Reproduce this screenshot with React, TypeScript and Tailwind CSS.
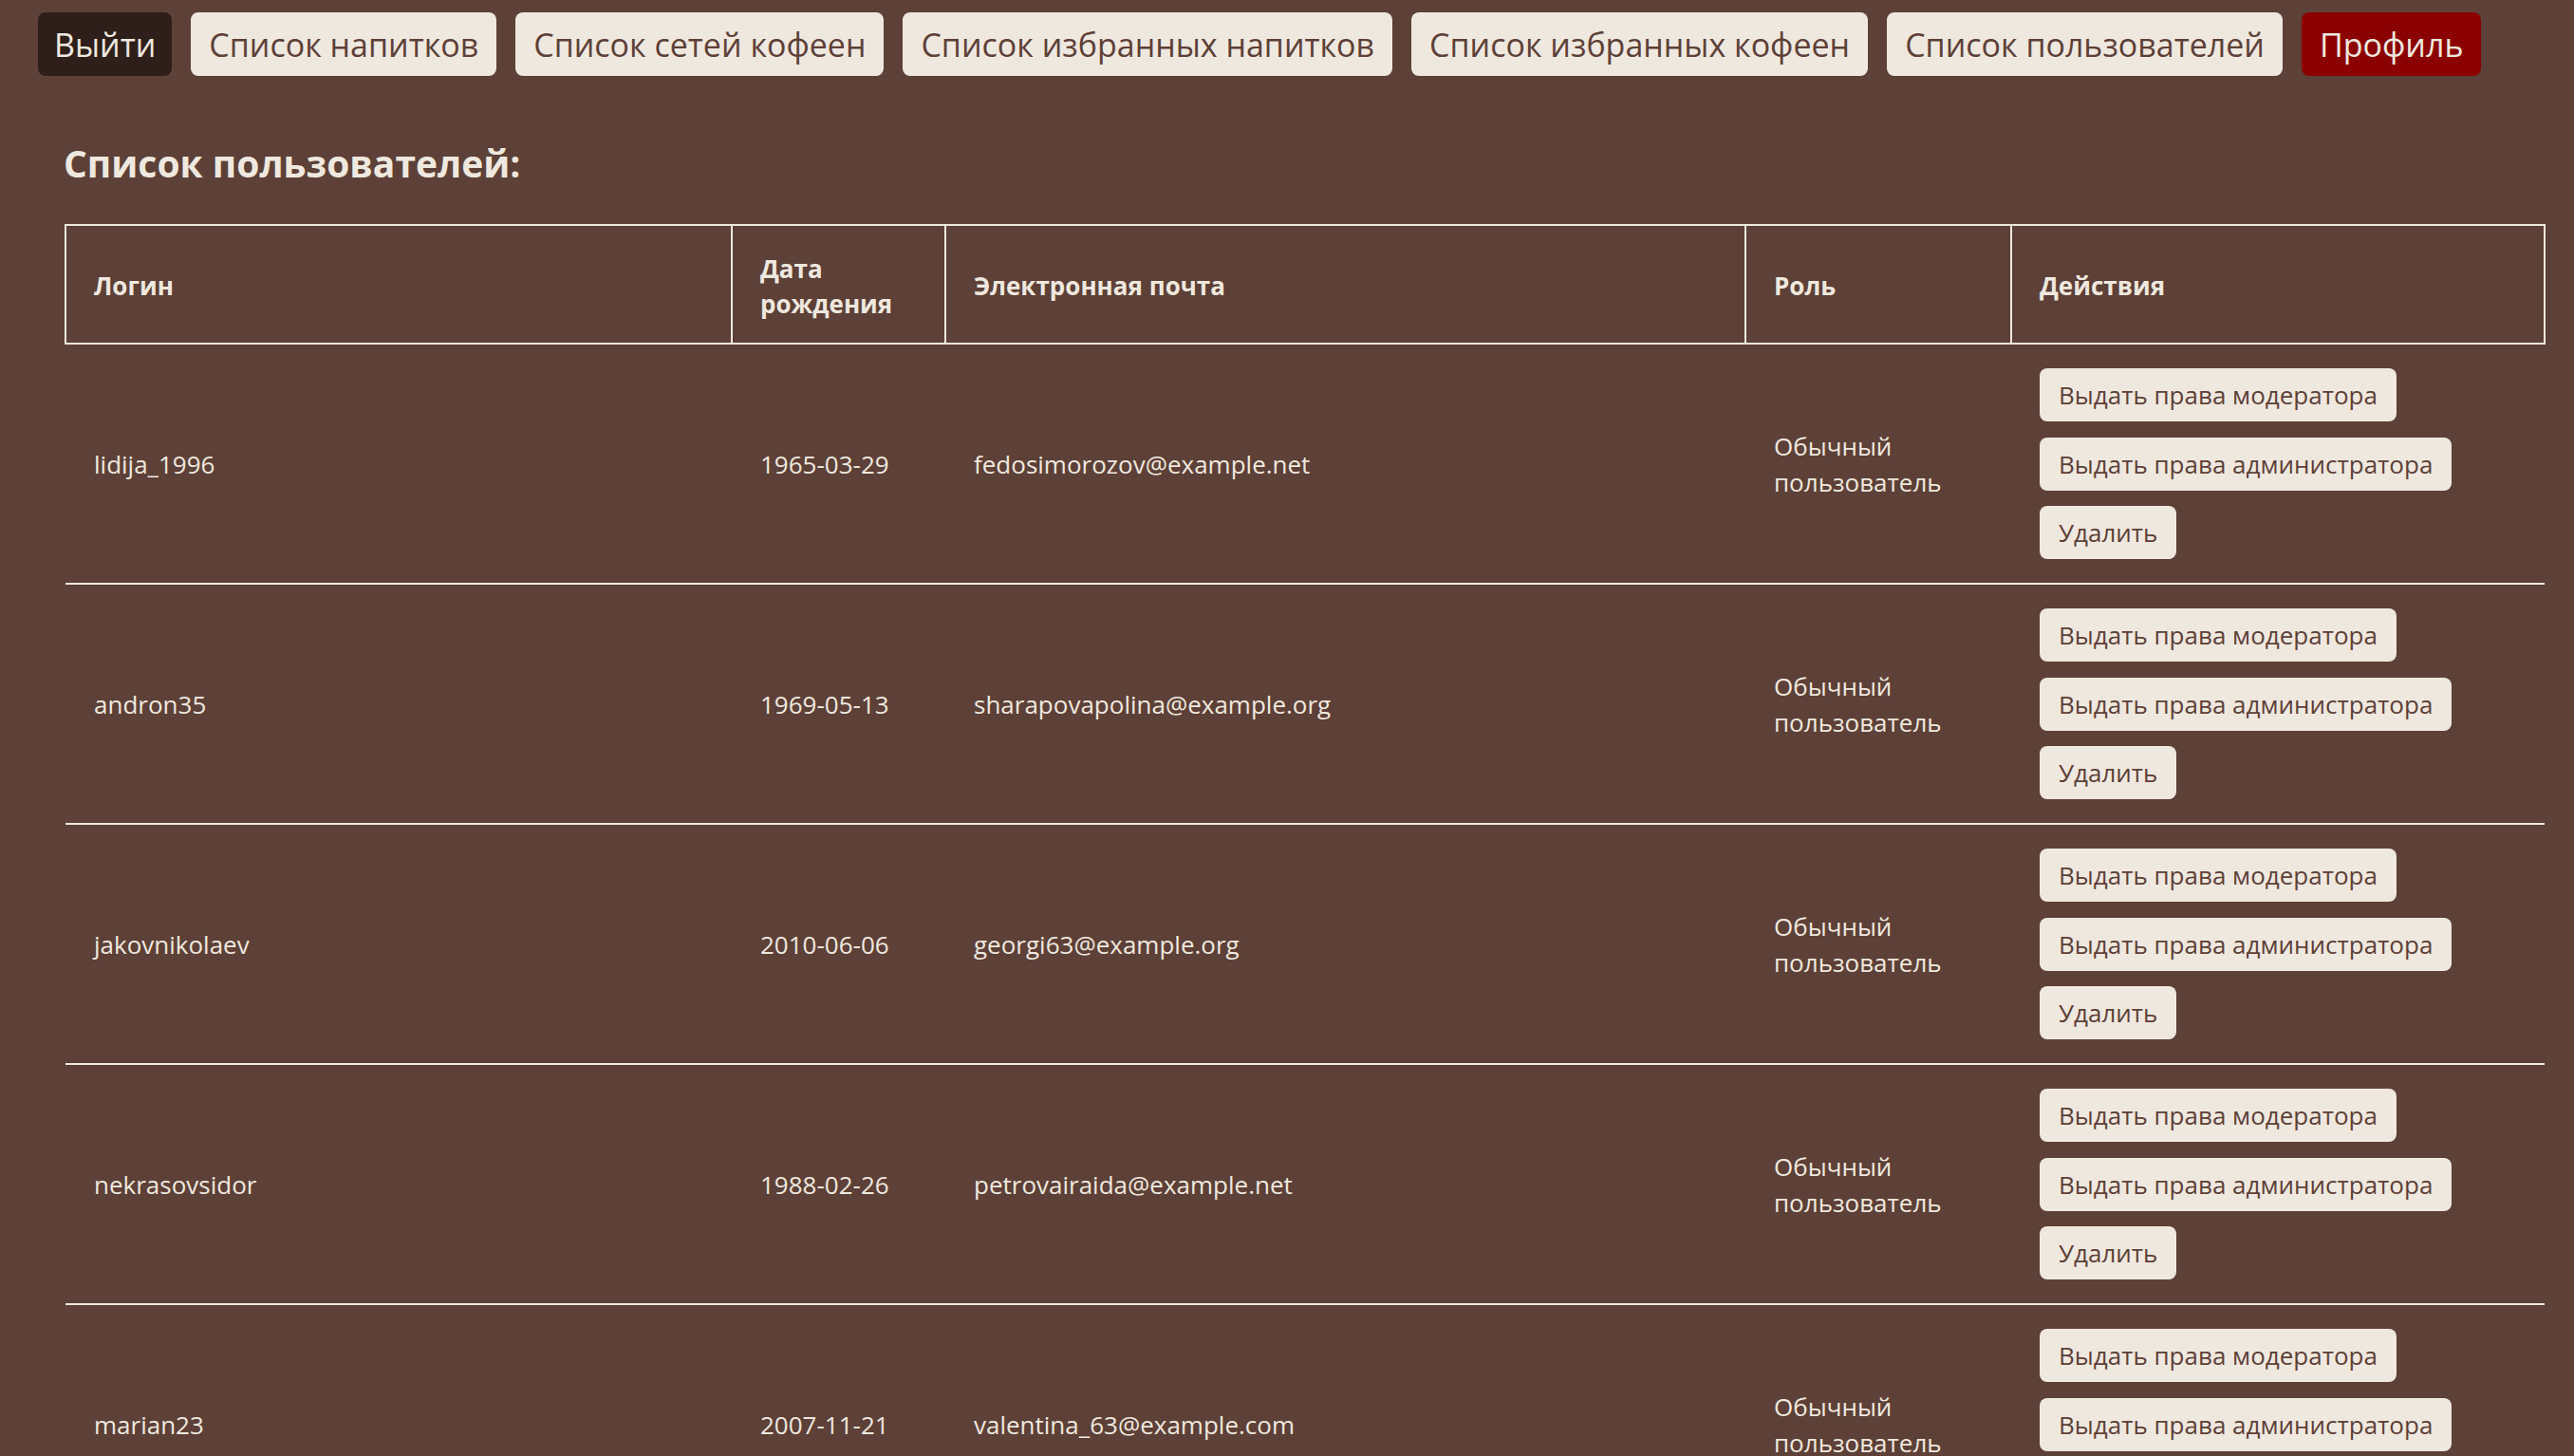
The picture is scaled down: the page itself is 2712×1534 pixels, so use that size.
import React from "react";

const navItems = [
  "Список напитков",
  "Список сетей кофеен",
  "Список избранных напитков",
  "Список избранных кофеен",
  "Список пользователей",
];

const users = [
  { login: "lidija_1996", birth: "1965-03-29", email: "fedosimorozov@example.net" },
  { login: "andron35", birth: "1969-05-13", email: "sharapovapolina@example.org" },
  { login: "jakovnikolaev", birth: "2010-06-06", email: "georgi63@example.org" },
  { login: "nekrasovsidor", birth: "1988-02-26", email: "petrovairaida@example.net" },
  { login: "marian23", birth: "2007-11-21", email: "valentina_63@example.com" },
];

function ActionButton({ children }: { children: React.ReactNode }) {
  return (
    <button className="h-[56px] self-start rounded-[8px] bg-[#efe8df] px-[20px] text-[26px] leading-none text-[#5d4037]">
      {children}
    </button>
  );
}

export default function App() {
  return (
    <div className="min-h-screen bg-[#5d4037] font-['Open_Sans','Noto_Sans',sans-serif] text-[#efe8df]">
      {/* Top nav */}
      <nav className="flex gap-[20px] pl-[40px] pt-[13px]">
        <button className="h-[67px] rounded-[8px] bg-[#2e1f1b] px-[17px] pt-[2px] text-[34px] text-[#efe8df]">
          Выйти
        </button>
        {navItems.map((item) => (
          <button
            key={item}
            className="h-[67px] rounded-[8px] bg-[#efe8df] px-[19px] pt-[2px] text-[34px] text-[#5d4037]"
          >
            {item}
          </button>
        ))}
        <button className="h-[67px] rounded-[8px] bg-[#8b0000] px-[19px] pt-[2px] text-[34px] text-[#efe8df]">
          Профиль
        </button>
      </nav>

      <h2 className="ml-[67px] mt-[64px] text-[39px] font-bold leading-[56px]">Список пользователей:</h2>

      <table className="ml-[68px] mt-[36px] w-[2612px] table-fixed border-collapse">
        <colgroup>
          <col className="w-[702px]" />
          <col className="w-[225px]" />
          <col className="w-[843px]" />
          <col className="w-[280px]" />
          <col className="w-[562px]" />
        </colgroup>
        <thead>
          <tr className="h-[125px]">
            {["Логин", "Дата рождения", "Электронная почта", "Роль", "Действия"].map((h) => (
              <th
                key={h}
                className="border-2 border-[#efe8df] pl-[29px] pr-[31px] pt-[4px] text-left align-middle text-[26px] font-bold leading-[37px]"
              >
                {h}
              </th>
            ))}
          </tr>
        </thead>
        <tbody>
          {users.map((u) => (
            <tr key={u.login} className="border-b-2 border-[#efe8df] text-[26px] leading-[38px]">
              <td className="px-[30px] py-[25px] align-middle">{u.login}</td>
              <td className="px-[30px] py-[25px] align-middle">{u.birth}</td>
              <td className="px-[30px] py-[25px] align-middle">{u.email}</td>
              <td className="px-[30px] py-[25px] align-middle">Обычный пользователь</td>
              <td className="px-[30px] py-[25px] align-middle">
                <div className="flex flex-col gap-[16.5px]">
                  <ActionButton>Выдать права модератора</ActionButton>
                  <ActionButton>Выдать права администратора</ActionButton>
                  <ActionButton>Удалить</ActionButton>
                </div>
              </td>
            </tr>
          ))}
        </tbody>
      </table>
    </div>
  );
}
